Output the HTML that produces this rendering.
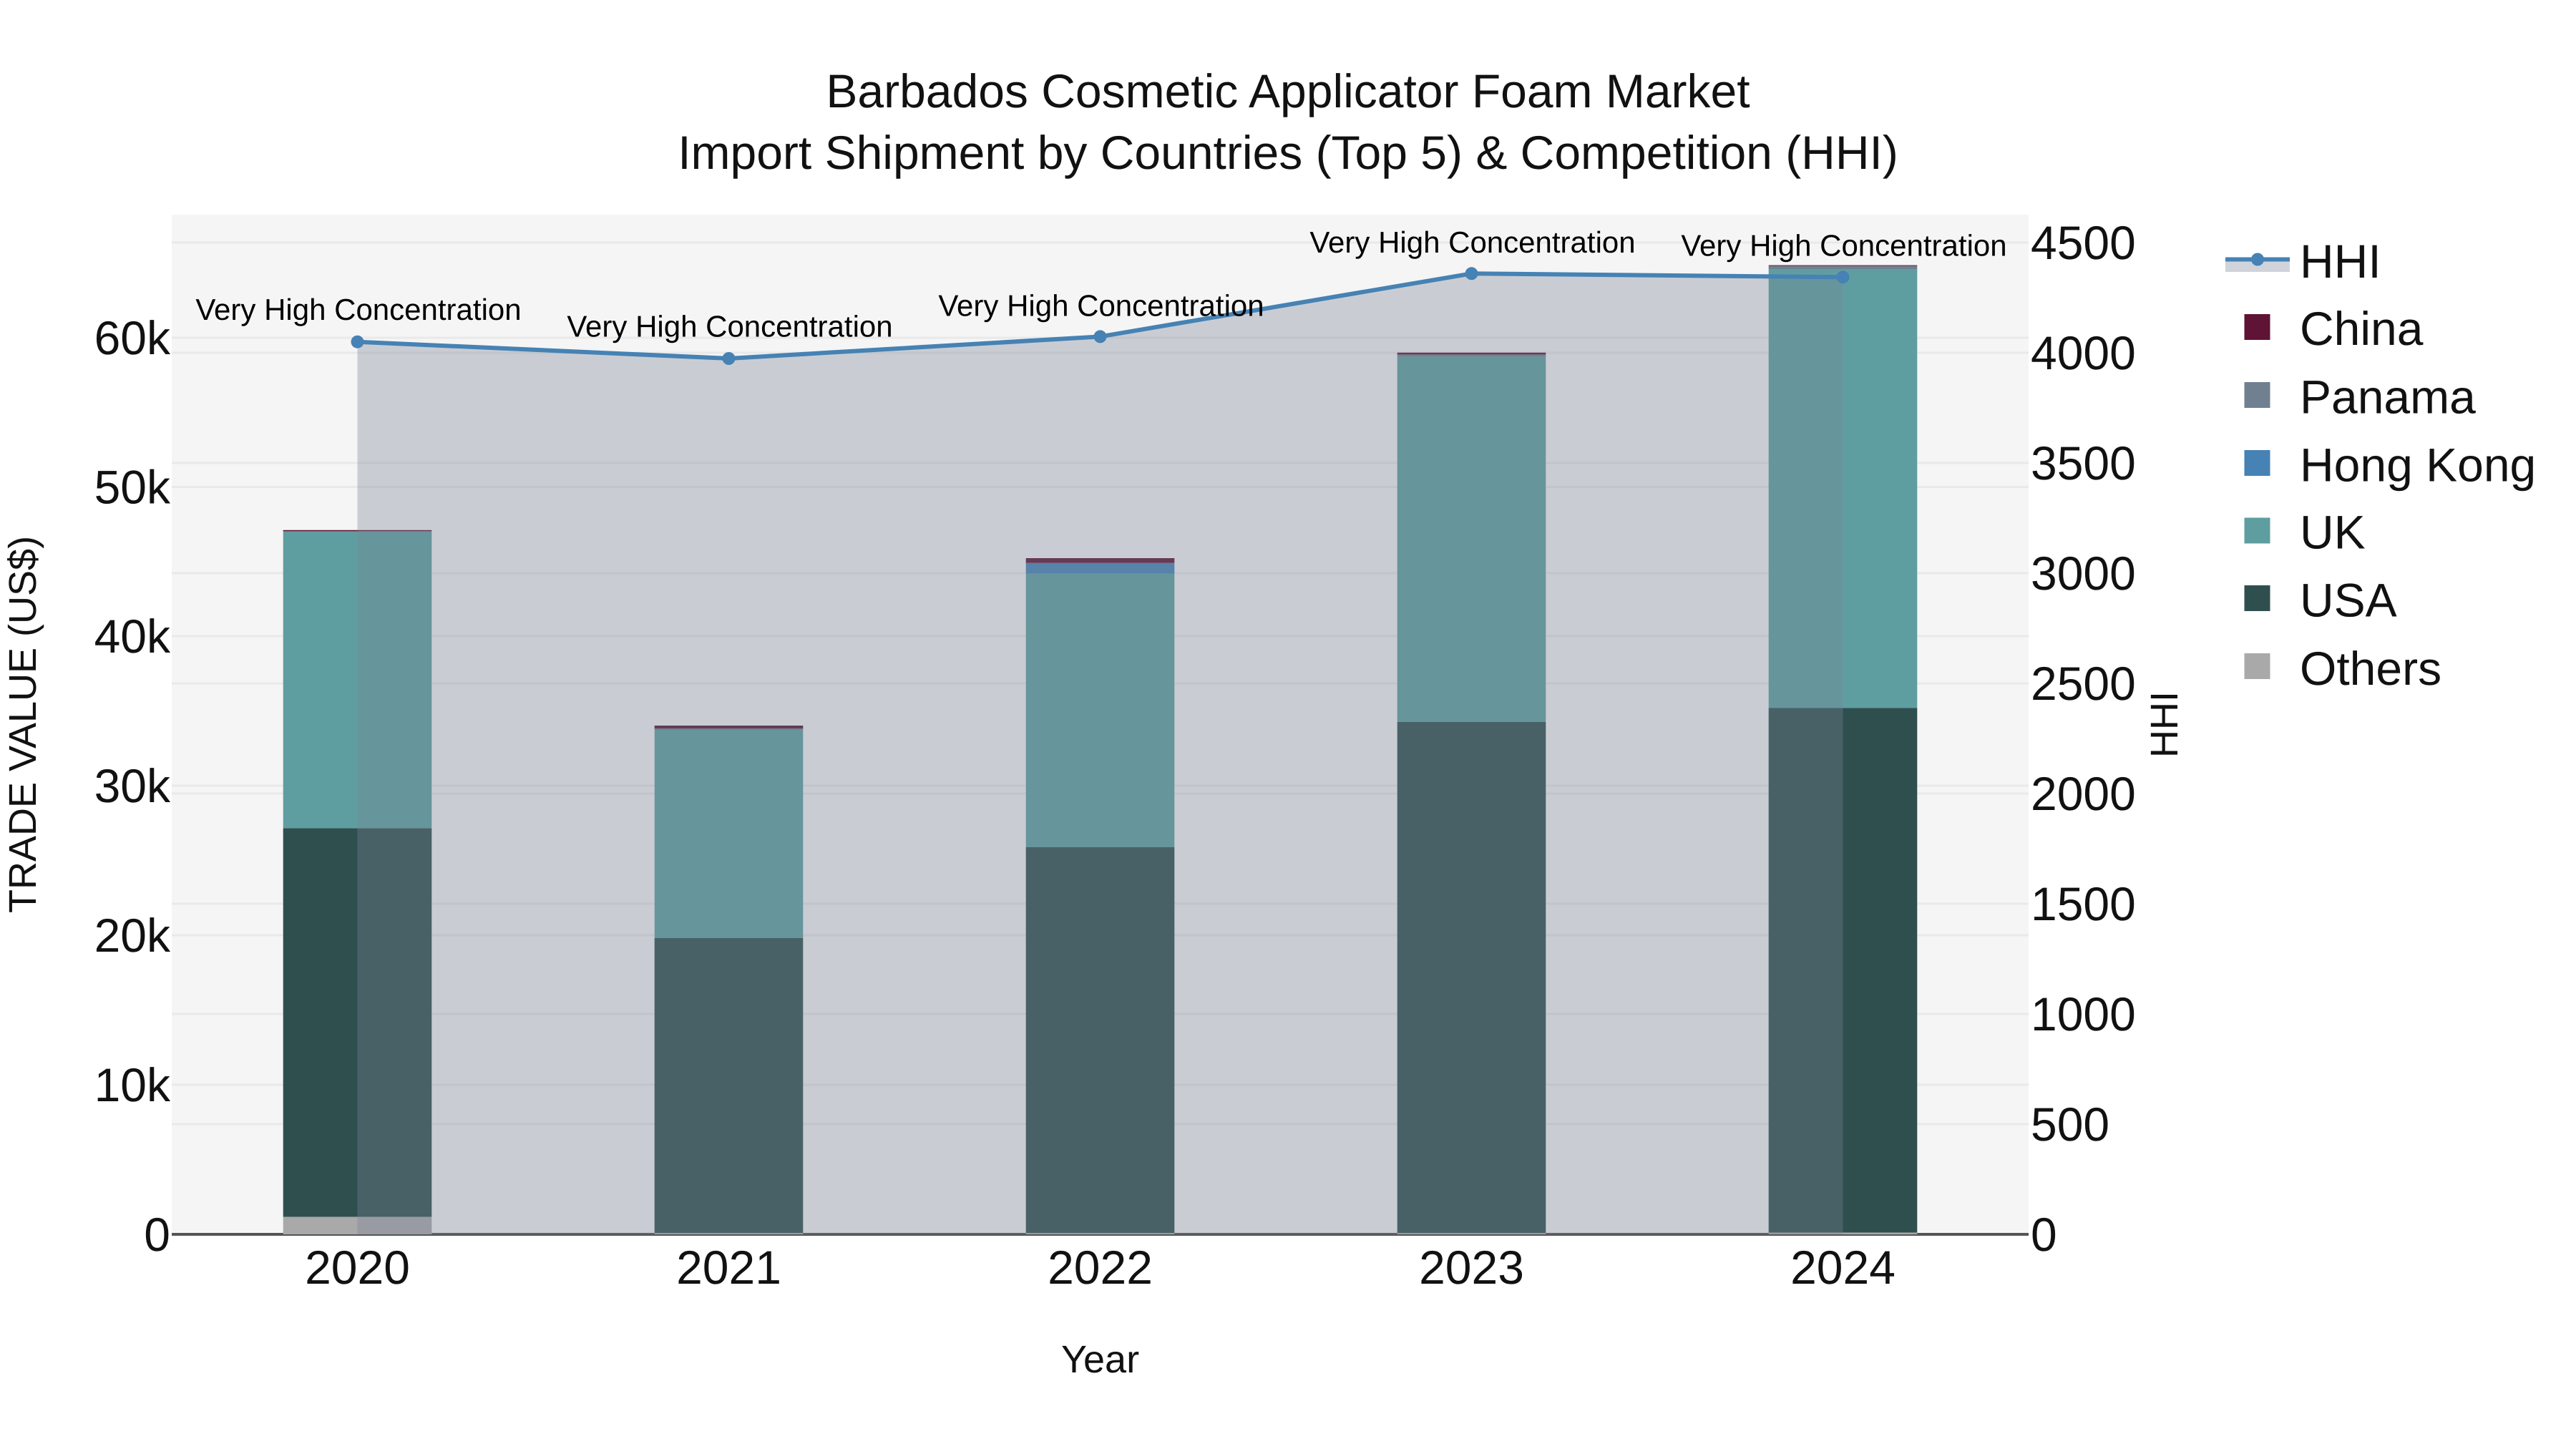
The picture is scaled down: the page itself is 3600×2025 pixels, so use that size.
<!DOCTYPE html>
<html lang="en">
<head>
<meta charset="utf-8">
<title>Barbados Cosmetic Applicator Foam Market</title>
<style>
html,body{margin:0;padding:0;width:3600px;height:2025px;background:#fff;overflow:hidden}
svg{display:block;position:absolute;left:0;top:0}
text{font-family:"Liberation Sans",Arial,sans-serif;fill:#111;text-rendering:geometricPrecision}
.t{font-size:66px}
.a{font-size:42px;fill:#000;text-anchor:middle}
.l{text-anchor:end}
.c{text-anchor:middle}
.ti{font-size:54px;text-anchor:middle}
</style>
</head>
<body>
<svg width="3600" height="2025" viewBox="0 0 3600 2025" xmlns="http://www.w3.org/2000/svg">
<rect width="3600" height="2025" fill="#fff"/>
<!-- plot background -->
<rect x="240" y="300" width="2595" height="1425" fill="#f5f5f5"/>
<!-- grid -->
<g stroke="#e9e9e9" stroke-width="3" fill="none">
<path d="M240 1516H2835M240 1307H2835M240 1098H2835M240 889H2835M240 680.5H2835M240 472H2835"/>
<path d="M240 1571H2835M240 1417H2835M240 1263H2835M240 1109H2835M240 955H2835M240 801H2835M240 647H2835M240 493H2835M240 339H2835"/>
</g>
<path d="M240 1725H2835" stroke="#555" stroke-width="4"/>
<!-- bars 2020 -->
<g>
<rect x="395.7" y="1700.5" width="207.6" height="24.5" fill="#a9a9a9"/>
<rect x="395.7" y="1157.3" width="207.6" height="543.2" fill="#2f4f4f"/>
<rect x="395.7" y="742.4" width="207.6" height="414.9" fill="#5f9ea0"/>
<rect x="395.7" y="740.8" width="207.6" height="1.6" fill="#5f1335"/>
<!-- 2021 -->
<rect x="914.7" y="1723" width="207.6" height="2" fill="#a9a9a9"/>
<rect x="914.7" y="1310.7" width="207.6" height="412.3" fill="#2f4f4f"/>
<rect x="914.7" y="1020" width="207.6" height="290.7" fill="#5f9ea0"/>
<rect x="914.7" y="1018" width="207.6" height="2" fill="#708090"/>
<rect x="914.7" y="1014" width="207.6" height="4" fill="#5f1335"/>
<!-- 2022 -->
<rect x="1433.7" y="1723" width="207.6" height="2" fill="#a9a9a9"/>
<rect x="1433.7" y="1184" width="207.6" height="539" fill="#2f4f4f"/>
<rect x="1433.7" y="801.7" width="207.6" height="382.3" fill="#5f9ea0"/>
<rect x="1433.7" y="786.7" width="207.6" height="15" fill="#4682b4"/>
<rect x="1433.7" y="780" width="207.6" height="6.7" fill="#5f1335"/>
<!-- 2023 -->
<rect x="1952.7" y="1723" width="207.6" height="2" fill="#a9a9a9"/>
<rect x="1952.7" y="1009" width="207.6" height="714" fill="#2f4f4f"/>
<rect x="1952.7" y="498" width="207.6" height="511" fill="#5f9ea0"/>
<rect x="1952.7" y="495.4" width="207.6" height="2.6" fill="#708090"/>
<rect x="1952.7" y="492.8" width="207.6" height="2.6" fill="#5f1335"/>
<!-- 2024 -->
<rect x="2471.7" y="1722.5" width="207.6" height="2.5" fill="#a9a9a9"/>
<rect x="2471.7" y="989.5" width="207.6" height="733" fill="#2f4f4f"/>
<rect x="2471.7" y="376" width="207.6" height="613.5" fill="#5f9ea0"/>
<rect x="2471.7" y="371.6" width="207.6" height="4.4" fill="#708090"/>
<rect x="2471.7" y="370.6" width="207.6" height="1" fill="#5f1335"/>
</g>
<!-- HHI area + line -->
<path d="M499.5 477.7L1018.5 501L1537.5 470.4L2056.5 382.3L2575.5 387.3V1725H499.5Z" fill="rgba(120,132,148,.35)"/>
<path d="M499.5 477.7L1018.5 501L1537.5 470.4L2056.5 382.3L2575.5 387.3" fill="none" stroke="#4682b4" stroke-width="6"/>
<g fill="#4682b4">
<circle cx="499.5" cy="477.7" r="9"/>
<circle cx="1018.5" cy="501" r="9"/>
<circle cx="1537.5" cy="470.4" r="9"/>
<circle cx="2056.5" cy="382.3" r="9"/>
<circle cx="2575.5" cy="387.3" r="9"/>
</g>
<!-- annotations -->
<text class="a" x="501" y="447">Very High Concentration</text>
<text class="a" x="1020" y="470.5">Very High Concentration</text>
<text class="a" x="1539" y="441.5">Very High Concentration</text>
<text class="a" x="2058" y="353">Very High Concentration</text>
<text class="a" x="2577" y="357.5">Very High Concentration</text>
<!-- title -->
<text x="1800" y="150" font-size="66" text-anchor="middle">Barbados Cosmetic Applicator Foam Market</text>
<text x="1800" y="236" font-size="66" text-anchor="middle">Import Shipment by Countries (Top 5) &amp; Competition (HHI)</text>
<!-- left ticks -->
<g class="t">
<text class="l" x="238" y="1748">0</text>
<text class="l" x="238" y="1539">10k</text>
<text class="l" x="238" y="1330">20k</text>
<text class="l" x="238" y="1121">30k</text>
<text class="l" x="238" y="912">40k</text>
<text class="l" x="238" y="703.5">50k</text>
<text class="l" x="238" y="495">60k</text>
</g>
<!-- right ticks -->
<g class="t">
<text x="2838" y="1748">0</text>
<text x="2838" y="1594">500</text>
<text x="2838" y="1440">1000</text>
<text x="2838" y="1286">1500</text>
<text x="2838" y="1132">2000</text>
<text x="2838" y="978">2500</text>
<text x="2838" y="824">3000</text>
<text x="2838" y="670">3500</text>
<text x="2838" y="516">4000</text>
<text x="2838" y="362">4500</text>
</g>
<!-- x ticks -->
<g class="t">
<text class="c" x="499.5" y="1794">2020</text>
<text class="c" x="1018.5" y="1794">2021</text>
<text class="c" x="1537.5" y="1794">2022</text>
<text class="c" x="2056.5" y="1794">2023</text>
<text class="c" x="2575.5" y="1794">2024</text>
</g>
<!-- axis titles -->
<text class="ti" x="1537.5" y="1918">Year</text>
<text class="ti" transform="translate(50 1012.5) rotate(-90)">TRADE VALUE (US$)</text>
<text class="ti" transform="translate(3043 1012.5) rotate(-90)">HHI</text>
<!-- legend -->
<rect x="3110" y="362.5" width="90" height="17.5" fill="rgba(120,132,148,.35)"/>
<path d="M3110 362.5H3200" stroke="#4682b4" stroke-width="6"/>
<circle cx="3155" cy="362.5" r="9" fill="#4682b4"/>
<rect x="3136.5" y="439" width="36" height="36" fill="#5f1335"/>
<rect x="3136.5" y="534" width="36" height="36" fill="#708090"/>
<rect x="3136.5" y="629" width="36" height="36" fill="#4682b4"/>
<rect x="3136.5" y="723.5" width="36" height="36" fill="#5f9ea0"/>
<rect x="3136.5" y="818" width="36" height="36" fill="#2f4f4f"/>
<rect x="3136.5" y="913" width="36" height="36" fill="#a9a9a9"/>
<g class="t">
<text x="3214" y="388">HHI</text>
<text x="3214" y="482">China</text>
<text x="3214" y="577.5">Panama</text>
<text x="3214" y="672.5">Hong Kong</text>
<text x="3214" y="766.5">UK</text>
<text x="3214" y="861.5">USA</text>
<text x="3214" y="957">Others</text>
</g>
</svg>
</body>
</html>
